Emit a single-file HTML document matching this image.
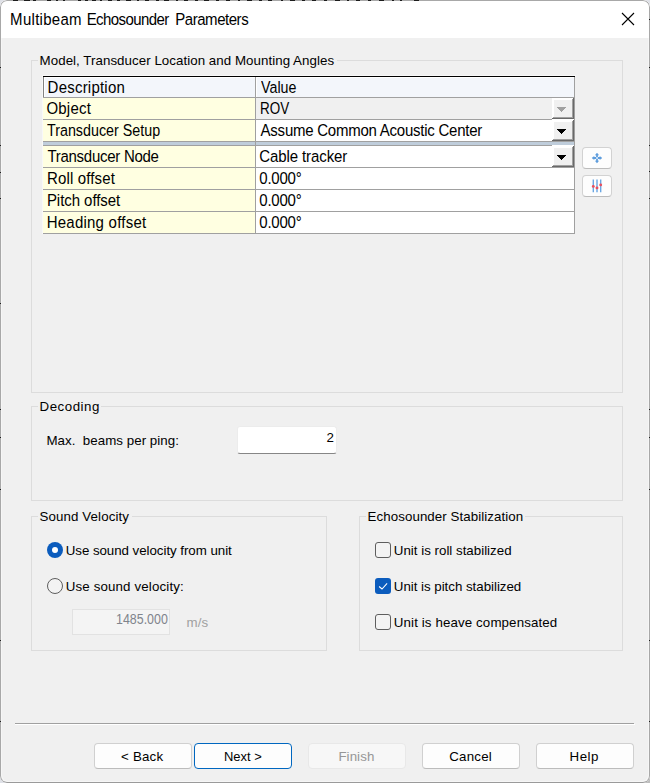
<!DOCTYPE html>
<html lang="en">
<head>
<meta charset="utf-8">
<title>Multibeam Echosounder Parameters</title>
<style>
html,body{margin:0;padding:0;width:650px;height:783px;overflow:hidden;background:#dfe1e7;}
body{position:relative;font-family:"Liberation Sans",Arial,sans-serif;font-size:13.33px;color:#000;}
.a{position:absolute;}
.fr{position:absolute;top:0;height:1px;background:#1c1c1c;z-index:10;}
.win{position:absolute;left:0;top:0;width:650px;height:783px;border-radius:7px;background:#f0f0f0;overflow:hidden;}
.winb{position:absolute;left:0;top:0;width:650px;height:783px;box-sizing:border-box;border:1px solid #a8a8a8;border-bottom-color:#9a9a9a;border-radius:7px;z-index:9;}
.winb2{position:absolute;left:1px;top:38px;width:648px;height:744px;box-sizing:border-box;border:1px solid #f6f6f6;border-top:none;border-radius:0 0 7px 7px;z-index:8;}
.titlebar{position:absolute;left:0;top:0;width:650px;height:38px;background:#fff;}
.t{position:absolute;white-space:pre;line-height:20px;height:20px;transform:scaleY(1.02);transform-origin:0 14px;}
.f15{font-size:15px;transform:scaleY(1.045);transform-origin:0 15px;}
.grp{position:absolute;box-sizing:border-box;border:1px solid #dcdcdc;}
.gl{position:absolute;background:#f0f0f0;height:14px;}
.c{position:absolute;}
.yl{background:#ffffe1;}
.cb{position:absolute;width:22px;height:21px;background:#f0f0f0;box-shadow:inset -1px -1px #696969,inset 1px 1px #fff,inset -2px -2px #a0a0a0,inset 2px 2px #fff;}
.cb svg{position:absolute;left:5px;top:9px;}
.tb{position:absolute;width:30px;height:22px;box-sizing:border-box;border:1px solid #d2d2d2;border-bottom-color:#bcbcbc;border-radius:4px;background:#fdfdfd;}
.edit{position:absolute;box-sizing:border-box;background:#fff;border:1px solid #ececec;border-bottom:1px solid #868686;border-radius:3px;}
.btn{position:absolute;top:743px;width:98px;height:26px;box-sizing:border-box;border:1px solid #d0d0d0;border-bottom-color:#bcbcbc;border-radius:4px;background:#fdfdfd;}
.radio{position:absolute;width:16px;height:16px;box-sizing:border-box;border-radius:50%;}
.chk{position:absolute;width:16px;height:16px;box-sizing:border-box;border-radius:3px;}
</style>
</head>
<body>
<div class="a" style="left:640px;top:773px;width:10px;height:10px;background:#bebebe;"></div>
<div class="win">
<div class="titlebar"></div>
<div class="t f15" style="left:10.1px;top:10px;"><span style="letter-spacing:0.29px;">Multibeam</span> <span style="letter-spacing:-0.58px;margin-left:0.60px;">Echosounder</span> <span style="letter-spacing:-0.46px;margin-left:2.40px;">Parameters</span></div>
<svg class="a" style="left:621px;top:12px;" width="14" height="14" viewBox="0 0 14 14"><path d="M1 1 L13 13 M13 1 L1 13" stroke="#000" stroke-width="1.1" fill="none"/></svg>
<div class="grp" style="left:31px;top:60px;width:592px;height:333px;"></div>
<div class="gl" style="left:38px;top:54px;width:299px;"></div>
<div class="t" style="left:39.6px;top:51px;letter-spacing:0.04px;">Model, Transducer Location and Mounting Angles</div>
<div class="grp" style="left:31px;top:406px;width:592px;height:95px;"></div>
<div class="gl" style="left:38px;top:400px;width:63px;"></div>
<div class="t" style="left:39.6px;top:397px;letter-spacing:0.49px;">Decoding</div>
<div class="grp" style="left:31px;top:516px;width:296px;height:135px;"></div>
<div class="gl" style="left:38px;top:510px;width:94px;"></div>
<div class="t" style="left:39.5px;top:507px;letter-spacing:0.10px;">Sound Velocity</div>
<div class="grp" style="left:359px;top:516px;width:264px;height:135px;"></div>
<div class="gl" style="left:366px;top:510px;width:159px;"></div>
<div class="t" style="left:367.6px;top:507px;letter-spacing:0.06px;">Echosounder Stabilization</div>
<div class="a" style="left:43px;top:76px;width:532px;height:158px;background:#a0a0a0;"></div>
<div class="c" style="left:43px;top:76px;width:532px;height:1px;background:#000;"></div>
<div class="c" style="left:43px;top:77px;width:1px;height:20px;background:#828282;"></div>
<div class="c" style="left:42px;top:75px;width:534px;height:1px;background:#f8f8f8;"></div>
<div class="c" style="left:42px;top:75px;width:1px;height:159px;background:#f8f8f8;"></div>
<div class="c" style="left:44px;top:77px;width:211px;height:20px;background:#f3f6fb;"></div>
<div class="c" style="left:256px;top:77px;width:318px;height:20px;background:#f3f6fb;"></div>
<div class="c" style="left:44px;top:77px;width:211px;height:1px;background:#fff;"></div>
<div class="c" style="left:256px;top:77px;width:318px;height:1px;background:#fff;"></div>
<div class="c" style="left:44px;top:77px;width:1px;height:20px;background:#fff;"></div>
<div class="c" style="left:256px;top:77px;width:1px;height:20px;background:#fff;"></div>
<div class="c" style="left:43px;top:98px;width:212px;height:21px;background:#ffffe1;"></div>
<div class="c" style="left:43px;top:120px;width:212px;height:21px;background:#ffffe1;"></div>
<div class="c" style="left:43px;top:146px;width:212px;height:21px;background:#ffffe1;"></div>
<div class="c" style="left:43px;top:168px;width:212px;height:21px;background:#ffffe1;"></div>
<div class="c" style="left:43px;top:190px;width:212px;height:21px;background:#ffffe1;"></div>
<div class="c" style="left:43px;top:212px;width:212px;height:21px;background:#ffffe1;"></div>
<div class="c" style="left:43px;top:142px;width:212px;height:3px;background:#bfcddb;"></div>
<div class="c" style="left:256px;top:142px;width:318px;height:3px;background:#bfcddb;"></div>
<div class="c" style="left:256px;top:98px;width:318px;height:21px;background:#f0f0f0;"></div>
<div class="c" style="left:256px;top:120px;width:318px;height:21px;background:#fff;"></div>
<div class="c" style="left:256px;top:146px;width:318px;height:21px;background:#fff;"></div>
<div class="c" style="left:256px;top:168px;width:318px;height:21px;background:#fff;"></div>
<div class="c" style="left:256px;top:190px;width:318px;height:21px;background:#fff;"></div>
<div class="c" style="left:256px;top:212px;width:318px;height:21px;background:#fff;"></div>
<div class="c" style="left:552px;top:119px;width:22px;height:1px;background:#fff;"></div>
<div class="c" style="left:552px;top:145px;width:22px;height:1px;background:#fff;"></div>
<div class="cb" style="left:552px;top:98px;"><svg width="9" height="5" viewBox="0 0 9 5" shape-rendering="crispEdges"><polygon points="0,0 9,0 4.5,5" fill="#a0a0a0"/></svg></div>
<div class="cb" style="left:552px;top:120px;"><svg width="9" height="5" viewBox="0 0 9 5" shape-rendering="crispEdges"><polygon points="0,0 9,0 4.5,5" fill="#000"/></svg></div>
<div class="cb" style="left:552px;top:146px;"><svg width="9" height="5" viewBox="0 0 9 5" shape-rendering="crispEdges"><polygon points="0,0 9,0 4.5,5" fill="#000"/></svg></div>
<div class="t f15" style="left:47.6px;top:78px;letter-spacing:0.22px;">Description</div>
<div class="t f15" style="left:261.1px;top:78px;transform:scale(0.951,1.045);">Value</div>
<div class="t f15" style="left:46.4px;top:99px;letter-spacing:0.22px;">Object</div>
<div class="t f15" style="left:260.2px;top:99px;transform:scale(0.897,1.045);">ROV</div>
<div class="t f15" style="left:47.4px;top:121px;transform:scale(0.953,1.045);">Transducer Setup</div>
<div class="t f15" style="left:260.6px;top:121px;letter-spacing:-0.24px;">Assume Common Acoustic Center</div>
<div class="t f15" style="left:47.4px;top:147px;letter-spacing:-0.27px;">Transducer Node</div>
<div class="t f15" style="left:259.3px;top:147px;letter-spacing:-0.10px;">Cable tracker</div>
<div class="t f15" style="left:46.9px;top:169px;letter-spacing:0.16px;">Roll offset</div>
<div class="t f15" style="left:259.3px;top:169px;letter-spacing:-0.22px;">0.000°</div>
<div class="t f15" style="left:46.9px;top:191px;letter-spacing:-0.05px;">Pitch offset</div>
<div class="t f15" style="left:259.3px;top:191px;letter-spacing:-0.22px;">0.000°</div>
<div class="t f15" style="left:46.7px;top:213px;letter-spacing:0.23px;">Heading offset</div>
<div class="t f15" style="left:259.3px;top:213px;letter-spacing:-0.22px;">0.000°</div>
<div class="tb" style="left:582px;top:147px;"><svg class="a" style="left:8px;top:4px;" width="12" height="12" viewBox="0 0 12 12"><g fill="#5e9ddd"><path d="M6 0.7 L8.1 3.3 H6.9 V5 H5.1 V3.3 H3.9 Z"/><path d="M6 11.3 L8.1 8.7 H6.9 V7 H5.1 V8.7 H3.9 Z"/><path d="M0.7 6 L3.3 3.9 V5.1 H5 V6.9 H3.3 V8.1 Z"/><path d="M11.3 6 L8.7 3.9 V5.1 H7 V6.9 H8.7 V8.1 Z"/></g><rect x="5" y="5" width="2" height="2" fill="#c4dcf4"/></svg></div>
<div class="tb" style="left:582px;top:175px;"><svg class="a" style="left:7px;top:3px;" width="14" height="16" viewBox="0 0 14 16"><path d="M3.3 0.5 V13.3 M10.7 0.5 V13.3" stroke="#6aa6e2" stroke-width="1.4" fill="none"/><path d="M7 0.5 V13.3" stroke="#93bfec" stroke-width="2" fill="none"/><circle cx="3.3" cy="7.4" r="1.45" fill="#e94f5e"/><circle cx="7" cy="8.9" r="1.45" fill="#e94f5e"/><circle cx="10.7" cy="5.9" r="1.45" fill="#e94f5e"/></svg></div>
<div class="t" style="left:46.4px;top:431px;letter-spacing:0.03px;">Max.  beams per ping:</div>
<div class="edit" style="left:237px;top:426px;width:100px;height:28px;"></div>
<div class="t" style="left:326.4px;top:428px;">2</div>
<div class="radio" style="left:47px;top:542px;background:#0b5cbd;"><div class="a" style="left:5px;top:5px;width:6px;height:6px;border-radius:50%;background:#fff;"></div></div>
<div class="t" style="left:65.7px;top:541px;letter-spacing:-0.05px;">Use sound velocity from unit</div>
<div class="radio" style="left:47px;top:578px;border:1px solid #5e5e5e;background:#f3f3f3;"></div>
<div class="t" style="left:65.7px;top:577px;letter-spacing:0.14px;">Use sound velocity:</div>
<div class="a" style="left:72px;top:609px;width:98px;height:26px;box-sizing:border-box;border:1px solid #e2e2e2;background:#f4f4f4;"></div>
<div class="t" style="left:116.0px;top:609px;font-size:14px;transform:scale(0.888,1.02);color:#80848c;">1485.000</div>
<div class="t" style="left:186.5px;top:613px;letter-spacing:0.09px;color:#a0a0a0;">m/s</div>
<div class="chk" style="left:375px;top:542px;border:1px solid #5e5e5e;background:#f3f3f3;"></div>
<div class="t" style="left:393.8px;top:541px;">Unit is roll stabilized</div>
<div class="chk" style="left:375px;top:578px;background:#0b5cbd;"><svg class="a" style="left:0;top:0;" width="16" height="16" viewBox="0 0 16 16"><path d="M4.1 8.5 L7 11 L12.1 5.4" stroke="#fff" stroke-width="1.05" fill="none"/></svg></div>
<div class="t" style="left:393.8px;top:577px;letter-spacing:-0.03px;">Unit is pitch stabilized</div>
<div class="chk" style="left:375px;top:614px;border:1px solid #5e5e5e;background:#f3f3f3;"></div>
<div class="t" style="left:393.8px;top:613px;letter-spacing:0.11px;">Unit is heave compensated</div>
<div class="c" style="left:15px;top:723px;width:619px;height:1px;background:#a0a0a0;"></div>
<div class="c" style="left:15px;top:724px;width:620px;height:1px;background:#fff;"></div>
<div class="btn" style="left:94px;"></div>
<div class="t" style="left:121.1px;top:747px;letter-spacing:0.18px;">&lt; Back</div>
<div class="btn" style="left:194px;border-color:#0067c0;"></div>
<div class="t" style="left:223.5px;top:747px;transform:scale(0.973,1.02);">Next &gt;</div>
<div class="btn" style="left:308px;background:#f7f7f7;border-color:#e8e8e8;"></div>
<div class="t" style="left:338.4px;top:747px;letter-spacing:0.07px;color:#969696;">Finish</div>
<div class="btn" style="left:422px;"></div>
<div class="t" style="left:449.3px;top:747px;letter-spacing:0.18px;">Cancel</div>
<div class="btn" style="left:536px;"></div>
<div class="t" style="left:569.5px;top:747px;letter-spacing:0.54px;">Help</div>
<div class="winb2"></div>
<div class="winb"></div>
<div class="fr" style="left:13px;width:5px;"></div><div class="fr" style="left:24px;width:6px;"></div><div class="fr" style="left:33px;width:3px;"></div><div class="fr" style="left:47px;width:4px;"></div><div class="fr" style="left:56px;width:2px;"></div><div class="fr" style="left:63px;width:2px;"></div><div class="fr" style="left:78px;width:3px;"></div><div class="fr" style="left:85px;width:3px;"></div><div class="fr" style="left:92px;width:4px;"></div><div class="fr" style="left:100px;width:2px;"></div><div class="fr" style="left:108px;width:4px;"></div><div class="fr" style="left:117px;width:3px;"></div><div class="fr" style="left:126px;width:5px;"></div><div class="fr" style="left:137px;width:2px;"></div><div class="fr" style="left:145px;width:4px;"></div><div class="fr" style="left:156px;width:3px;"></div><div class="fr" style="left:164px;width:5px;"></div><div class="fr" style="left:176px;width:2px;"></div><div class="fr" style="left:184px;width:4px;"></div><div class="fr" style="left:195px;width:3px;"></div><div class="fr" style="left:204px;width:5px;"></div><div class="fr" style="left:216px;width:3px;"></div><div class="fr" style="left:226px;width:4px;"></div><div class="fr" style="left:238px;width:2px;"></div><div class="fr" style="left:247px;width:5px;"></div><div class="fr" style="left:259px;width:3px;"></div><div class="fr" style="left:268px;width:4px;"></div><div class="fr" style="left:281px;width:2px;"></div><div class="fr" style="left:290px;width:5px;"></div><div class="fr" style="left:302px;width:3px;"></div><div class="fr" style="left:312px;width:4px;"></div><div class="fr" style="left:324px;width:3px;"></div><div class="fr" style="left:335px;width:5px;"></div><div class="fr" style="left:347px;width:2px;"></div><div class="fr" style="left:356px;width:4px;"></div><div class="fr" style="left:368px;width:3px;"></div><div class="fr" style="left:379px;width:5px;"></div><div class="fr" style="left:392px;width:2px;"></div><div class="fr" style="left:400px;width:2px;"></div><div class="fr" style="left:414px;width:5px;"></div>
<div class="fr" style="left:0;top:67px;width:1px;"></div><div class="fr" style="left:0;top:145px;width:1px;"></div><div class="fr" style="left:0;top:172px;width:1px;"></div><div class="fr" style="left:0;top:198px;width:1px;"></div><div class="fr" style="left:0;top:303px;width:1px;"></div><div class="fr" style="left:0;top:409px;width:1px;"></div><div class="fr" style="left:0;top:437px;width:1px;"></div><div class="fr" style="left:0;top:489px;width:1px;"></div><div class="fr" style="left:0;top:640px;width:1px;"></div><div class="fr" style="left:0;top:721px;width:1px;"></div><div class="fr" style="left:649px;top:19px;width:1px;"></div><div class="fr" style="left:649px;top:67px;width:1px;"></div><div class="fr" style="left:649px;top:145px;width:1px;"></div><div class="fr" style="left:649px;top:171px;width:1px;"></div><div class="fr" style="left:649px;top:198px;width:1px;"></div><div class="fr" style="left:649px;top:409px;width:1px;"></div><div class="fr" style="left:649px;top:437px;width:1px;"></div><div class="fr" style="left:649px;top:489px;width:1px;"></div><div class="fr" style="left:649px;top:640px;width:1px;"></div><div class="fr" style="left:649px;top:721px;width:1px;"></div>
</div>
</body>
</html>
